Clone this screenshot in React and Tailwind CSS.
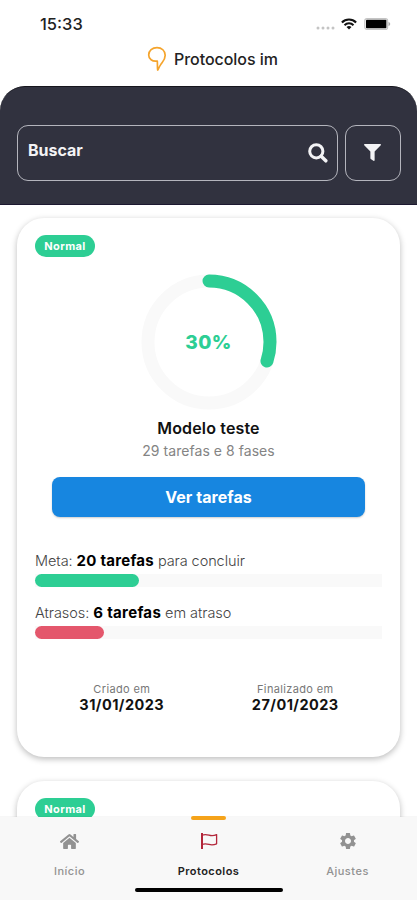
import { FaFilter, FaHome } from 'react-icons/fa'
import { MdSettings } from 'react-icons/md'

const PROTOCOLS = [
  {
    id: 1,
    status: 'Normal',
    details: { progress: 30, name: 'Modelo teste', tasks: 29, phases: 8, goal: 20, goalPct: 30, late: 6, latePct: 20, created: '31/01/2023', finished: '27/01/2023' },
  },
  // details not loaded yet
  { id: 2, status: 'Normal' },
]

function StatusBar() {
  return (
    <div className="flex h-[46px] shrink-0 items-center justify-between pt-0.5 pr-[26px] pl-10">
      <span className="text-[16.5px] leading-5 font-medium text-[#222]">15:33</span>
      <div className="flex items-center">
        <svg className="mt-2 mr-1.5" width="19" height="4" viewBox="0 0 19 4" fill="#c4c4c4">
          <circle cx="2" cy="2" r="1.5" />
          <circle cx="7" cy="2" r="1.5" />
          <circle cx="12" cy="2" r="1.5" />
          <circle cx="17" cy="2" r="1.5" />
        </svg>
        <svg className="mr-[7px]" width="16" height="12" viewBox="0 0 16 12" fill="none" stroke="#111">
          <path d="M0.9 4.5a10 10 0 0 1 14.2 0" strokeWidth="2.1" />
          <path d="M3.5 7.2a6.3 6.3 0 0 1 9 0" strokeWidth="2" />
          <path d="M8 11.6 5.5 9.1a3.6 3.6 0 0 1 5 0z" fill="#111" stroke="none" />
        </svg>
        <svg width="27" height="12" viewBox="0 0 27 12">
          <rect x="0.8" y="0.6" width="22.8" height="10.8" rx="2.2" fill="#fff" stroke="#c4c4c4" strokeWidth="1.2" />
          <rect x="2" y="1.8" width="20.4" height="8.4" rx="0.8" fill="#000" />
          <path d="M24.5 4v4c1-.4 1.7-1.1 1.7-2s-.7-1.6-1.7-2z" fill="#aaa" />
        </svg>
      </div>
    </div>
  )
}

function Logo() {
  return (
    <svg width="20" height="26" viewBox="0 0 20 26" fill="none" stroke="#f5a42c" strokeWidth="1.7" strokeLinejoin="round">
      <path d="M10.3 15C5.2 15.8 1.7 13 1.7 9c0-4.3 3.6-7.4 8.3-7.4s8.2 3.2 8.2 7.6c0 4.7-2.7 6.7-4.5 9.4-1.2 1.8-2 3.6-3 5.5-.5-2.8-.1-5.5-.4-9.1z" />
    </svg>
  )
}

function SearchIcon() {
  return (
    <svg width="20" height="20" viewBox="0 0 20 20" fill="none" stroke="currentColor">
      <circle cx="8.3" cy="8.3" r="6.6" strokeWidth="3" />
      <path d="M13.2 13.2l4.6 4.6" strokeWidth="3.5" strokeLinecap="round" />
    </svg>
  )
}

function Ring({ value }) {
  const r = 61
  const c = 2 * Math.PI * r
  return (
    <div className="relative mt-[17px] size-[136px]">
      <svg className="-rotate-90" width="136" height="136" viewBox="0 0 136 136" fill="none" strokeWidth="13">
        <circle cx="68" cy="68" r={r} stroke="#f9f9f9" />
        <circle cx="68" cy="68" r={r} stroke="#2dce94" strokeLinecap="round" strokeDasharray={`${(c * value) / 100} ${c}`} />
      </svg>
      <span className="absolute inset-0 flex items-center justify-center pt-[2px] text-[19px] font-extrabold tracking-[0.4px] text-[#2dce94]">
        {value}%
      </span>
    </div>
  )
}

function Bar({ pct, color }) {
  return (
    <div className="h-[13px] bg-[#f9f9f9]">
      <div className={`h-full rounded-full ${color}`} style={{ width: `${pct}%` }} />
    </div>
  )
}

function DateInfo({ label, date }) {
  return (
    <div className="flex-1 text-center">
      <div className="text-[11px] leading-[14px] tracking-[0.35px] text-[#777]">{label}</div>
      <div className="text-[14.5px] leading-[18px] font-bold tracking-[0.45px] text-[#111]">{date}</div>
    </div>
  )
}

function CardDetails({ item }) {
  return (
    <>
      <div className="flex flex-col items-center">
        <Ring value={item.progress} />
        <h2 className="mt-[8px] text-[16px] leading-5 font-semibold tracking-[0.15px] text-[#111]">{item.name}</h2>
        <p className="mt-[3px] text-[14px] leading-5 tracking-[0.05px] text-[#848484]">
          {item.tasks} tarefas e {item.phases} fases
        </p>
        <button className="mt-4 h-10 w-[313px] rounded-lg bg-[#1786e0] text-[16px] font-bold tracking-[0.05px] text-white shadow-[0_1px_2px_rgba(0,0,0,0.2)]">
          Ver tarefas
        </button>
      </div>

      <div className="mt-[34px] text-[14.5px] leading-5 font-light tracking-[-0.08px] text-[#444]">
        Meta: <b className="text-[15px] font-bold tracking-[0.25px] text-black">{item.goal} tarefas</b> para concluir
      </div>
      <div className="mt-[3px]">
        <Bar pct={item.goalPct} color="bg-[#2dce94]" />
      </div>
      <div className="mt-4 text-[14.5px] leading-5 font-light tracking-[-0.05px] text-[#444]">
        Atrasos: <b className="text-[15px] font-bold tracking-[0.3px] text-black">{item.late} tarefas</b> em atraso
      </div>
      <div className="mt-[3px]">
        <Bar pct={item.latePct} color="bg-[#e4576c]" />
      </div>

      <div className="mt-[43px] flex">
        <DateInfo label="Criado em" date={item.created} />
        <DateInfo label="Finalizado em" date={item.finished} />
      </div>
    </>
  )
}

function ProtocolCard({ item }) {
  return (
    <div className="h-[539px] shrink-0 rounded-[27px] bg-white px-[18px] pt-[17px] shadow-[0_2px_6px_rgba(0,0,0,0.27)]">
      <div className="flex h-[22px] w-[60px] items-center justify-center rounded-full bg-[#2dce94] text-[11px] font-bold tracking-[0.4px] text-white">
        {item.status}
      </div>
      {item.details && <CardDetails item={item.details} />}
    </div>
  )
}

function FlagIcon() {
  return (
    <svg width="18" height="18" viewBox="0 0 18 18" fill="none" stroke="#b3263a" strokeWidth="1.3" strokeLinejoin="round">
      <path d="M2 1v16" strokeWidth="2" />
      <path d="M2 3.2c2.5-1 4.5-.8 7 0s4.6.8 7.6-.6v9.2c-3 1.3-5.1 1.4-7.6.6s-4.5-1-7 0" />
    </svg>
  )
}

const TABS = [
  { label: 'Início', icon: <FaHome size={19} /> },
  { label: 'Protocolos', icon: <FlagIcon />, active: true },
  { label: 'Ajustes', icon: <MdSettings size={20} /> },
]

function TabBar() {
  return (
    <nav className="relative flex h-[83px] shrink-0 bg-[#f8f8f8] shadow-[0_0_1px_rgba(0,0,0,0.2)]">
      {TABS.map(t => (
        <div key={t.label} className={`relative flex flex-1 flex-col items-center pt-[15px] ${t.active ? 'text-[#222]' : 'text-[#929292]'}`}>
          {t.active && <span className="absolute -top-px h-1 w-[35px] rounded-full bg-[#f5a31a]" />}
          <span className="flex h-[18px] items-center">{t.icon}</span>
          <span className={`mt-[14px] text-[11px] leading-[14px] ${t.active ? 'font-semibold tracking-[0.45px]' : 'font-medium tracking-[0.5px]'}`}>{t.label}</span>
        </div>
      ))}
      <span className="absolute bottom-2 left-[135px] h-1 w-[148px] rounded-full bg-black" />
    </nav>
  )
}

export default function App() {
  return (
    <div className="flex h-[900px] w-[417px] flex-col overflow-hidden bg-white font-['Inter',sans-serif]">
      <StatusBar />
      <div className="flex h-10 shrink-0 items-start gap-[7px] pl-[147px]">
        <Logo />
        <h1 className="mt-[3px] text-[16px] leading-5 font-medium tracking-[-0.05px] text-[#222]">Protocolos im</h1>
      </div>

      <header className="flex h-[119px] shrink-0 items-start gap-[7px] rounded-t-[25px] border-y border-t-[#16161d] border-b-[#1c1830] bg-[#31323f] pt-[38px] pr-4 pl-[17px]">
        <div className="flex h-14 w-[321px] items-center justify-between rounded-[11px] border-[1.5px] border-[#b4b5bd] pr-[9px] pl-2.5 text-[#f3f3f5]">
          <span className="mb-[7px] text-[16px] font-bold">Buscar</span>
          <SearchIcon />
        </div>
        <button className="flex h-14 w-14 items-center justify-center rounded-[11px] border-[1.5px] border-[#b4b5bd] pr-0.5 pb-0.5 text-[#f3f3f5]">
          <FaFilter size={17} />
        </button>
      </header>

      <main className="flex min-h-0 flex-1 flex-col gap-6 overflow-hidden px-[17px] pt-[13px]">
        {PROTOCOLS.map(p => <ProtocolCard key={p.id} item={p} />)}
      </main>

      <TabBar />
    </div>
  )
}
